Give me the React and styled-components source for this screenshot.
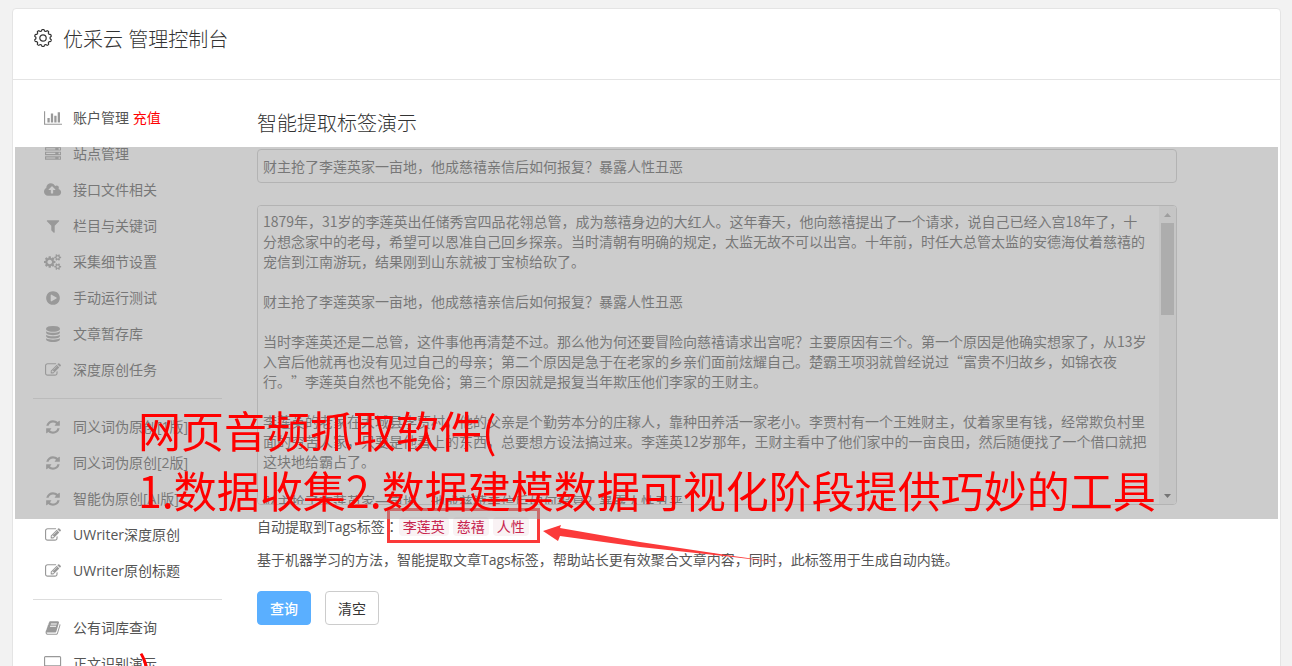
import React from "react";
import styled, { createGlobalStyle, css } from "styled-components";

const GlobalStyle = createGlobalStyle`
  * { box-sizing: border-box; }
  body {
    margin: 0;
    background: #f2f2f2;
    color: #555;
    font: 14px/20px "Open Sans", "Noto Sans CJK SC", sans-serif;
  }
`;

const Page = styled.div`
  position: relative;
  height: 100vh;
  overflow: hidden;
  padding: 8px 11px 0 12px;
`;

const Card = styled.div`
  background: #fff;
  border: 1px solid #e4e4e4;
  border-radius: 4px;
`;

const Header = styled.header`
  display: flex;
  align-items: center;
  gap: 10px;
  height: 71px;
  padding: 0 20px 12px;
  border-bottom: 1px solid #e4e4e4;
  color: #333;
`;

const Brand = styled.h1`
  margin: 0;
  padding-top: 4px;
  font-size: 20px;
  line-height: 28px;
  font-weight: 300;
`;

const Columns = styled.div`
  display: flex;
  gap: 35px;
  padding: 20px 103px 0 20px;
`;

const Sidebar = styled.nav`
  flex: 0 0 189px;
`;

const Group = styled.ul`
  list-style: none;
  margin: 0;
  padding: 0;
  & + & {
    margin-top: 10px;
    padding-top: 10px;
    border-top: 1px solid #ddd;
  }
`;

const Item = styled.a`
  display: flex;
  align-items: center;
  gap: 10px;
  height: 36px;
  padding-left: 10px;
  color: #555;
  text-decoration: none;
  white-space: nowrap;
`;

const IconSlot = styled.span`
  display: flex;
  justify-content: center;
  flex: 0 0 20px;
  color: #999;
`;

const Hot = styled.span`
  color: #f00;
`;

const Main = styled.main`
  flex: 1;
  min-width: 0;
`;

const Title = styled.h2`
  margin: 9px 0 10px;
  font-size: 20px;
  line-height: 30px;
  font-weight: 300;
  color: #333;
`;

const field = css`
  display: block;
  width: 100%;
  padding: 5px;
  border: 1px solid #ccc;
  border-radius: 4px;
  background: #fff;
  color: #555;
  font: 14px/20px "Noto Sans CJK SC", sans-serif;
  outline: none;
`;

const TextInput = styled.input`
  ${field}
  height: 34px;
`;

const Editor = styled.div`
  position: relative;
  margin-top: 22px;
`;

const TextArea = styled.textarea`
  ${field}
  height: 300px;
  padding-right: 28px;
  resize: none;
  scrollbar-width: none;
  text-spacing-trim: space-all;
`;

const ScrollBar = styled.div`
  position: absolute;
  inset: 1px 1px 1px auto;
  width: 17px;
  display: flex;
  flex-direction: column;
  align-items: center;
  justify-content: space-between;
  border-radius: 0 3px 3px 0;
  background: #f1f1f1;
  pointer-events: none;
`;

const ScrollTrack = styled.div`
  flex: 1;
  width: 13px;
`;

const ScrollThumb = styled.div`
  height: 35%;
  background: #c1c1c1;
`;

const TagLine = styled.div`
  display: flex;
  align-items: center;
  margin-top: 11px;
  height: 20px;
`;

const Colon = styled.span`
  font-family: "Noto Sans CJK TC", sans-serif;
`;

const TagBox = styled.span`
  position: relative;
  display: flex;
  gap: 4px;
`;

const Tag = styled.code`
  padding: 0 4px;
  border-radius: 4px;
  background: #f9f2f4;
  color: #c7254e;
  font: 14px/19px "Noto Sans CJK SC", sans-serif;
`;

const Mark = styled.span`
  position: absolute;
  inset: -9px -11px -7px -12px;
  border: 3px solid #fb3a3a;
`;

const Arrow = styled.svg`
  position: absolute;
  left: calc(100% + 14px);
  top: 5px;
`;

const Note = styled.p`
  margin: 14px 0 21px;
`;

const Buttons = styled.div`
  display: flex;
  gap: 14px;
  padding-bottom: 60px;
`;

const Button = styled.button`
  width: 54px;
  height: 34px;
  padding: 0;
  border: 1px solid ${(p) => (p.$primary ? "#5aafff" : "#ccc")};
  border-radius: 4px;
  background: ${(p) => (p.$primary ? "#5aafff" : "#fff")};
  color: ${(p) => (p.$primary ? "#fff" : "#333")};
  font: ${(p) => (p.$primary ? 500 : 400)} 14px/20px "Noto Sans CJK SC", sans-serif;
`;

const Band = styled.div`
  position: absolute;
  left: 15px;
  right: 14px;
  top: 147px;
  height: 372px;
  background: rgba(153, 153, 153, 0.5);
  pointer-events: none;
`;

const Caption = styled.div`
  position: absolute;
  left: 138px;
  top: 399px;
  color: #f00;
  font: 43px/60px "Noto Sans CJK SC", sans-serif;
  white-space: pre;
  pointer-events: none;
`;

const GLYPHS = {
  chart: [2048, "M640 896v512h-256v-512h256zm384-512v1024h-256v-1024h256zm1024 1152v128h-2048v-1536h128v1408h1920zm-640-896v768h-256v-768h256zm384-384v1152h-256v-1152h256z"],
  server: [1792, "M128 1408h1024v-128h-1024v128zm0-512h1024v-128h-1024v128zm1568 448q0-40-28-68t-68-28-68 28-28 68 28 68 68 28 68-28 28-68zm-1568-960h1024v-128h-1024v128zm1568 448q0-40-28-68t-68-28-68 28-28 68 28 68 68 28 68-28 28-68zm0-512q0-40-28-68t-68-28-68 28-28 68 28 68 68 28 68-28 28-68zm96 832v384h-1792v-384h1792zm0-512v384h-1792v-384h1792zm0-512v384h-1792v-384h1792z"],
  cloud: [1920, "M1280 864q0-14-9-23l-352-352q-9-9-23-9t-23 9l-351 351q-10 12-10 24 0 14 9 23t23 9h224v352q0 13 9.500 22.500t22.500 9.500h192q13 0 22.500-9.500t9.500-22.500v-352h224q13 0 22.500-9.500t9.500-22.500zm640 288q0 159-112.500 271.500t-271.500 112.500h-1088q-185 0-316.500-131.500t-131.500-316.500q0-130 70-240t188-165q-2-30-2-43 0-212 150-362t362-150q156 0 285.500 87t188.500 231q71-62 166-62 106 0 181 75t75 181q0 76-41 138 130 31 213.500 135.500t83.500 238.500z"],
  filter: [1792, "M1595 295q17 41-14 70l-493 493v742q0 42-39 59-13 5-25 5-27 0-45-19l-256-256q-19-19-19-45v-486l-493-493q-31-29-14-70 17-39 59-39h1280q42 0 59 39z"],
  cogs: [1920, "M896 896q0-106-75-181t-181-75-181 75-75 181 75 181 181 75 181-75 75-181zm768 512q0-52-38-90t-90-38-90 38-38 90q0 53 37.500 90.500t90.500 37.500 90.500-37.500 37.500-90.500zm0-1024q0-52-38-90t-90-38-90 38-38 90q0 53 37.500 90.500t90.500 37.500 90.500-37.500 37.500-90.500zm-384 421v185q0 10-7 19.500t-16 10.500l-155 24q-11 35-32 76 34 48 90 115 7 11 7 20 0 12-7 19-23 30-82.500 89.500t-78.500 59.500q-11 0-21-7l-115-90q-37 19-77 31-11 108-23 155-7 24-30 24h-186q-11 0-20-7.500t-10-17.500l-23-153q-34-10-75-31l-118 89q-7 7-20 7-11 0-21-8-144-133-144-160 0-9 7-19 10-14 41-53t47-61q-23-44-35-82l-152-24q-10-1-17-9.500t-7-19.500v-185q0-10 7-19.500t16-10.500l155-24q11-35 32-76-34-48-90-115-7-11-7-20 0-12 7-20 22-30 82-89t79-59q11 0 21 7l115 90q34-18 77-32 11-108 23-154 7-24 30-24h186q11 0 20 7.500t10 17.500l23 153q34 10 75 31l118-89q8-7 20-7 11 0 21 8 144 133 144 160 0 8-7 19-12 16-42 54t-45 60q23 48 34 82l152 23q10 2 17 10.500t7 19.500zm640 533v140q0 16-149 31-12 27-30 52 51 113 51 138 0 4-4 7-122 71-124 71-8 0-46-47t-52-68q-20 2-30 2t-30-2q-14 21-52 68t-46 47q-2 0-124-71-4-3-4-7 0-25 51-138-18-25-30-52-149-15-149-31v-140q0-16 149-31 13-29 30-52-51-113-51-138 0-4 4-7 4-2 35-20t59-34 30-16q8 0 46 46.500t52 67.500q20-2 30-2t30 2q51-71 92-112l6-2q4 0 124 70 4 3 4 7 0 25-51 138 17 23 30 52 149 15 149 31zm0-1024v140q0 16-149 31-12 27-30 52 51 113 51 138 0 4-4 7-122 71-124 71-8 0-46-47t-52-68q-20 2-30 2t-30-2q-14 21-52 68t-46 47q-2 0-124-71-4-3-4-7 0-25 51-138-18-25-30-52-149-15-149-31v-140q0-16 149-31 13-29 30-52-51-113-51-138 0-4 4-7 4-2 35-20t59-34 30-16q8 0 46 46.500t52 67.500q20-2 30-2t30 2q51-71 92-112l6-2q4 0 124 70 4 3 4 7 0 25-51 138 17 23 30 52 149 15 149 31z"],
  play: [1792, "M896 128q209 0 385.500 103t279.500 279.500 103 385.500-103 385.500-279.500 279.500-385.500 103-385.500-103-279.500-279.500-103-385.500 103-385.500 279.500-279.500 385.500-103zm384 823q32-18 32-55t-32-55l-544-320q-31-19-64-1-32 19-32 56v640q0 37 32 56 16 8 32 8 17 0 32-9z"],
  database: [1792, "M896 768q237 0 443-43t325-127v170q0 69-103 128t-280 93.500-385 34.500-385-34.500-280-93.500-103-128v-170q119 84 325 127t443 43zm0 768q237 0 443-43t325-127v170q0 69-103 128t-280 93.500-385 34.500-385-34.500-280-93.500-103-128v-170q119 84 325 127t443 43zm0-384q237 0 443-43t325-127v170q0 69-103 128t-280 93.500-385 34.500-385-34.500-280-93.500-103-128v-170q119 84 325 127t443 43zm0-1152q208 0 385 34.500t280 93.500 103 128v128q0 69-103 128t-280 93.500-385 34.500-385-34.500-280-93.500-103-128v-128q0-69 103-128t280-93.500 385-34.500z"],
  edit: [1792, "M888 1184l116-116-152-152-116 116v56h96v96h56zm440-720q-16-16-33 1l-350 350q-17 17-1 33t33-1l350-350q17-17 1-33zm80 594v190q0 119-84.500 203.500t-203.500 84.500h-832q-119 0-203.500-84.500t-84.500-203.500v-832q0-119 84.500-203.500t203.500-84.500h832q63 0 117 25 15 7 18 23 3 17-9 29l-49 49q-14 14-32 8-23-6-45-6h-832q-66 0-113 47t-47 113v832q0 66 47 113t113 47h832q66 0 113-47t47-113v-126q0-13 9-22l64-64q15-15 35-7t20 29zm-96-738l288 288-672 672h-288v-288zm444 132l-92 92-288-288 92-92q28-28 68-28t68 28l152 152q28 28 28 68t-28 68z"],
  refresh: [1792, "M1639 1056q0 5-1 7-64 268-268 434.500t-478 166.500q-146 0-282.500-55t-243.500-157l-129 129q-19 19-45 19t-45-19-19-45v-448q0-26 19-45t45-19h448q26 0 45 19t19 45-19 45l-137 137q71 66 161 102t187 36q134 0 250-65t186-179q11-17 53-117 8-23 30-23h192q13 0 22.500 9.500t9.500 22.500zm25-800v448q0 26-19 45t-45 19h-448q-26 0-45-19t-19-45 19-45l138-138q-148-137-349-137-134 0-250 65t-186 179q-11 17-53 117-8 23-30 23h-199q-13 0-22.500-9.500t-9.500-22.500v-7q65-268 270-434.500t480-166.500q146 0 284 55.500t245 156.500l130-129q19-19 45-19t45 19 19 45z"],
  book: [1792, "M1703 478q40 57 18 129l-275 906q-19 64-76.500 107.500t-122.500 43.500h-923q-77 0-148.500-53.500t-99.500-131.500q-24-67-2-127 0-4 3-27t4-37q1-8-3-21.500t-3-19.500q2-11 8-21t16.500-23.500 16.500-23.500q23-38 45-91.500t30-91.500q3-10 .5-30t-.5-28q3-11 17-28t17-23q21-36 42-92t25-90q1-9-2.500-32t.5-28q4-13 22-30.500t22-22.500q19-26 42.500-84.500t27.500-96.500q1-8-3-25.500t-2-26.500q2-8 9-18t18-23 17-21q8-12 16.500-30.500t15-35 16-36 19.500-32 26.500-23.500 36-11.500 47.500 5.500l-1 3q38-9 51-9h761q74 0 114 56t18 130l-274 906q-36 119-71.500 153.500t-128.500 34.500h-869q-27 0-38 15-11 16-1 43 24 70 144 70h923q29 0 56-15.500t35-41.500l300-987q7-22 5-57 38 15 59 43zm-1064 2q-4 13 2 22.500t20 9.500h608q13 0 25.500-9.500t16.500-22.500l21-64q4-13-2-22.500t-20-9.500h-608q-13 0-25.500 9.500t-16.500 22.500zm-83 256q-4 13 2 22.500t20 9.500h608q13 0 25.500-9.500t16.500-22.500l21-64q4-13-2-22.500t-20-9.500h-608q-13 0-25.500 9.500t-16.500 22.500z"],
  desktop: [1920, "M1792 992v-832q0-13-9.500-22.500t-22.500-9.500h-1600q-13 0-22.500 9.500t-9.500 22.500v832q0 13 9.500 22.500t22.500 9.500h1600q13 0 22.500-9.500t9.500-22.500zm128-832v1088q0 66-47 113t-113 47h-544q0 37 16 77.500t32 71 16 43.500q0 26-19 45t-45 19h-512q-26 0-45-19t-19-45q0-14 16-44t32-70 16-78h-544q-66 0-113-47t-47-113v-1088q0-66 47-113t113-47h1600q66 0 113 47t47 113z"],
};

function Icon({ name }) {
  const [width, d] = GLYPHS[name];
  return (
    <IconSlot>
      <svg width={(width * 16) / 1792} height="16" viewBox={`0 0 ${width} 1792`} fill="currentColor" aria-hidden="true">
        <path d={d} />
      </svg>
    </IconSlot>
  );
}

function GearIcon() {
  const steps = 120;
  const points = Array.from({ length: steps }, (_, i) => {
    const a = (i / steps) * Math.PI * 2;
    const wave = Math.max(-1, Math.min(1, 1.8 * Math.cos(10 * a)));
    const r = 7.8 + 0.7 * wave;
    return `${(10 + r * Math.sin(a)).toFixed(2)},${(10 - r * Math.cos(a)).toFixed(2)}`;
  }).join(" ");
  return (
    <svg width="20" height="20" viewBox="0 0 20 20" fill="none" stroke="#333" strokeWidth="1.2" strokeLinejoin="round" aria-hidden="true">
      <polygon points={points} />
      <circle cx="10" cy="10" r="3.2" />
    </svg>
  );
}

function ScrollArrow({ down }) {
  return (
    <svg width="17" height="17" viewBox="0 0 17 17" fill={down ? "#505050" : "#a3a3a3"} aria-hidden="true">
      <path d={down ? "M5 7h7l-3.500 4z" : "M5 11h7l-3.500-4z"} />
    </svg>
  );
}

const MENU = [
  [
    ["chart", "账户管理", "充值"],
    ["server", "站点管理"],
    ["cloud", "接口文件相关"],
    ["filter", "栏目与关键词"],
    ["cogs", "采集细节设置"],
    ["play", "手动运行测试"],
    ["database", "文章暂存库"],
    ["edit", "深度原创任务"],
  ],
  [
    ["refresh", "同义词伪原创[1版]"],
    ["refresh", "同义词伪原创[2版]"],
    ["refresh", "智能伪原创[AI版]"],
    ["edit", "UWriter深度原创"],
    ["edit", "UWriter原创标题"],
  ],
  [
    ["book", "公有词库查询"],
    ["desktop", "正文识别演示"],
  ],
];

const HEADLINE = "财主抢了李莲英家一亩地，他成慈禧亲信后如何报复？暴露人性丑恶";

const ARTICLE = [
  "1879年，31岁的李莲英出任储秀宫四品花翎总管，成为慈禧身边的大红人。这年春天，他向慈禧提出了一个请求，说自己已经入宫18年了，十分想念家中的老母，希望可以恩准自己回乡探亲。当时清朝有明确的规定，太监无故不可以出宫。十年前，时任大总管太监的安德海仗着慈禧的宠信到江南游玩，结果刚到山东就被丁宝桢给砍了。",
  HEADLINE,
  "当时李莲英还是二总管，这件事他再清楚不过。那么他为何还要冒险向慈禧请求出宫呢？主要原因有三个。第一个原因是他确实想家了，从13岁入宫后他就再也没有见过自己的母亲；第二个原因是急于在老家的乡亲们面前炫耀自己。楚霸王项羽就曾经说过“富贵不归故乡，如锦衣夜行。”李莲英自然也不能免俗；第三个原因就是报复当年欺压他们李家的王财主。",
  "李莲英的老家在大城县李贾村，他的父亲是个勤劳本分的庄稼人，靠种田养活一家老小。李贾村有一个王姓财主，仗着家里有钱，经常欺负村里面的穷苦人家，只要是他看上的东西，总要想方设法搞过来。李莲英12岁那年，王财主看中了他们家中的一亩良田，然后随便找了一个借口就把这块地给霸占了。",
  HEADLINE,
].join("\n\n");

export default function App() {
  return (
    <Page lang="zh-CN">
      <GlobalStyle />
      <Card>
        <Header>
          <GearIcon />
          <Brand>优采云 管理控制台</Brand>
        </Header>
        <Columns>
          <Sidebar>
            {MENU.map((group, i) => (
              <Group key={i}>
                {group.map(([icon, label, hot]) => (
                  <li key={label}>
                    <Item href="#">
                      <Icon name={icon} />
                      <span>
                        {label} {hot && <Hot>{hot}</Hot>}
                      </span>
                    </Item>
                  </li>
                ))}
              </Group>
            ))}
          </Sidebar>
          <Main>
            <Title>智能提取标签演示</Title>
            <TextInput aria-label="标题" defaultValue={HEADLINE} />
            <Editor>
              <TextArea aria-label="正文" defaultValue={ARTICLE} />
              <ScrollBar>
                <ScrollArrow />
                <ScrollTrack>
                  <ScrollThumb />
                </ScrollTrack>
                <ScrollArrow down />
              </ScrollBar>
            </Editor>
            <TagLine>
              <span>
                自动提取到Tags标签<Colon lang="zh-TW">：</Colon>
              </span>
              <TagBox>
                <Tag>李莲英</Tag>
                <Tag>慈禧</Tag>
                <Tag>人性</Tag>
                <Mark />
                <Arrow width="241" height="44" viewBox="0 0 241 44" fill="#fb3a3a" aria-hidden="true">
                  <path d="M0 9L18 3L17 6L97 20L190 34L240 41L190 35L97 25L17 14L15 19Z" />
                </Arrow>
              </TagBox>
            </TagLine>
            <Note>基于机器学习的方法，智能提取文章Tags标签，帮助站长更有效聚合文章内容，同时，此标签用于生成自动内链。</Note>
            <Buttons>
              <Button type="button" $primary>查询</Button>
              <Button type="button">清空</Button>
            </Buttons>
          </Main>
        </Columns>
      </Card>
      <Band />
      <Caption>{"网页音频抓取软件(\n1.数据收集2.数据建模数据可视化阶段提供巧妙的工具\n\n\n)"}</Caption>
    </Page>
  );
}
